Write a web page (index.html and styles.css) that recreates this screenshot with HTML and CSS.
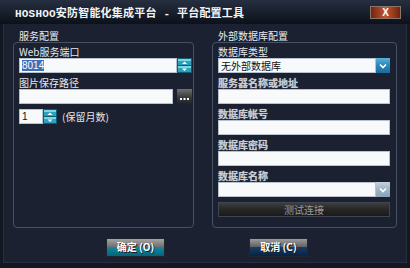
FILE: index.html
```html
<!DOCTYPE html>
<html lang="zh">
<head>
  <meta charset="UTF-8" />
  <title>平台配置工具</title>
  <link rel="stylesheet" href="styles.css">
</head>
<body>
  <div class="window">
    <div class="titlebar">
      <span class="title">HOSHOO安防智能化集成平台 - 平台配置工具</span>
      <button class="close-btn">X</button>
    </div>

    <div class="client">
      <div class="panels">
        <div class="group group-left">
          <div class="group-title">服务配置</div>

          <div class="field-label">Web服务端口</div>
          <div class="input-row">
            <div class="textbox"><span class="selected">8014</span></div>
            <span class="spin">
              <svg width="15" height="15" viewBox="0 0 15 15">
                <rect x="0" y="0" width="15" height="15" fill="#0b5f74"/>
                <rect x="1" y="1" width="13" height="6" fill="#2aa2bc"/>
                <rect x="1" y="8" width="13" height="6" fill="#2aa2bc"/>
                <rect x="1" y="1" width="13" height="2" fill="#7fd4e4"/>
                <rect x="1" y="8" width="13" height="2" fill="#7fd4e4"/>
                <polygon points="5,6 10,6 7.5,3.5" fill="#ffffff"/>
                <polygon points="5,10.5 10,10.5 7.5,13" fill="#ffffff"/>
              </svg>
            </span>
          </div>

          <div class="field-label">图片保存路径</div>
          <div class="input-row">
            <div class="textbox"></div>
            <span class="browse">
              <svg width="15" height="15" viewBox="0 0 15 15">
                <rect x="3" y="9" width="2" height="2" fill="#ffffff"/>
                <rect x="6.5" y="9" width="2" height="2" fill="#ffffff"/>
                <rect x="10" y="9" width="2" height="2" fill="#ffffff"/>
              </svg>
            </span>
          </div>

          <div class="input-row keep-row">
            <div class="textbox small">1</div>
            <span class="spin">
              <svg width="14" height="15" viewBox="0 0 14 15">
                <rect x="0" y="0" width="14" height="15" fill="#0b5f74"/>
                <rect x="1" y="1" width="12" height="6" fill="#2aa2bc"/>
                <rect x="1" y="8" width="12" height="6" fill="#2aa2bc"/>
                <rect x="1" y="1" width="12" height="2" fill="#7fd4e4"/>
                <rect x="1" y="8" width="12" height="2" fill="#7fd4e4"/>
                <polygon points="4.5,6 9.5,6 7,3.5" fill="#ffffff"/>
                <polygon points="4.5,10.5 9.5,10.5 7,13" fill="#ffffff"/>
              </svg>
            </span>
            <span class="hint">(保留月数)</span>
          </div>
        </div>

        <div class="group group-right">
          <div class="group-title">外部数据库配置</div>

          <div class="field-label">数据库类型</div>
          <div class="input-row">
            <div class="textbox combo-text">无外部数据库</div>
            <span class="drop">
              <svg width="14" height="15" viewBox="0 0 14 15">
                <polyline points="4,6.5 7,9.5 10,6.5" fill="none" stroke="#ffffff" stroke-width="1.6"/>
              </svg>
            </span>
          </div>

          <div class="field-label dim">服务器名称或地址</div>
          <div class="textbox"></div>

          <div class="field-label dim">数据库帐号</div>
          <div class="textbox"></div>

          <div class="field-label dim">数据库密码</div>
          <div class="textbox"></div>

          <div class="field-label dim">数据库名称</div>
          <div class="input-row">
            <div class="textbox"></div>
            <span class="drop disabled">
              <svg width="14" height="15" viewBox="0 0 14 15">
                <polyline points="4,6.5 7,9.5 10,6.5" fill="none" stroke="#ffffff" stroke-width="1.6"/>
              </svg>
            </span>
          </div>

          <button class="test-btn">测试连接</button>
        </div>
      </div>

      <div class="footer">
        <button class="dlg-btn ok-btn">确定 (O)</button>
        <button class="dlg-btn cancel-btn">取消 (C)</button>
      </div>
    </div>
  </div>
</body>
</html>
```

FILE: styles.css
```css
body {
  margin: 0;
  background: #121722;
  font-family: "Noto Sans CJK SC", "Noto Sans", sans-serif;
  font-size: 10px;
  color: #e6e8ec;
}

.window {
  width: 410px;
  height: 268px;
  display: flex;
  flex-direction: column;
  background: #121722;
  overflow: hidden;
}

.titlebar {
  height: 24px;
  flex: none;
  display: flex;
  align-items: center;
  padding-left: 15px;
  background: linear-gradient(#262f40, #0c111a);
}

.title {
  font-family: "Liberation Mono", "Noto Sans CJK SC", monospace;
  font-size: 11px;
  font-weight: bold;
  letter-spacing: 0.2px;
  color: #f2f4f8;
  white-space: nowrap;
}

.close-btn {
  margin-left: auto;
  margin-right: 9px;
  width: 31px;
  height: 13px;
  padding: 0;
  border: 1px solid #8c7468;
  background: linear-gradient(to right, #6e2414, #c8552c 50%, #6e2414);
  color: #ffffff;
  font-family: "Liberation Sans", sans-serif;
  font-size: 10px;
  font-weight: bold;
  line-height: 11px;
}

.client {
  flex: 1;
  margin: 0 3px 5px 3px;
  border: 1px solid #283040;
  border-top: none;
  background: #1b2130;
}

.panels {
  display: flex;
  gap: 18px;
  padding: 18px 0 0 9px;
}

.group {
  height: 186px;
  box-sizing: border-box;
  border: 1px solid #465162;
  border-radius: 4px;
}

.group-left {
  width: 181px;
  padding: 0 1px 0 5px;
}

.group-right {
  width: 185px;
  padding: 0 6px 0 5px;
}

.group-title {
  width: fit-content;
  margin: -13px 0 0 -1px;
  padding: 0 1px;
  line-height: 12px;
  background: #1b2130;
  color: #e8eaee;
}

.field-label {
  line-height: 13px;
  margin-top: 3px;
  white-space: nowrap;
}

.group-left .field-label:nth-of-type(3) {
  margin-top: 5px;
}

.field-label.dim {
  font-weight: bold;
  color: #c9cdd3;
  text-shadow: 0 0 1px #9aa0a8;
}

.input-row {
  display: flex;
  align-items: center;
}

.textbox {
  flex: 1;
  height: 15px;
  box-sizing: border-box;
  background: #f7f9fb;
  border: 1px solid #b8c2cc;
  color: #111111;
  line-height: 13px;
  padding-left: 2px;
  font-family: "Liberation Sans", "Noto Sans CJK SC", sans-serif;
}

.selected {
  background: #3f6fb8;
  color: #ffffff;
}

.combo-text {
  font-family: "Noto Sans CJK SC", sans-serif;
}

.spin {
  display: flex;
  flex: none;
}

.browse {
  display: flex;
  flex: none;
  margin-left: 4px;
  width: 15px;
  height: 15px;
  background: linear-gradient(#707070, #3a3a3a 55%, #1e2228);
}

.keep-row {
  margin-top: 5px;
}

.textbox.small {
  flex: none;
  width: 24px;
}

.hint {
  margin-left: 5px;
  color: #e6e8ec;
}

.drop {
  display: flex;
  flex: none;
  width: 14px;
  height: 15px;
  background: linear-gradient(#5ab0dc, #2a86ba 50%, #1a6a9c);
}

.drop.disabled {
  background: linear-gradient(#c4d2de, #9fb4c6 50%, #8aa2b6);
}

.test-btn {
  display: block;
  width: 100%;
  height: 15px;
  margin-top: 5px;
  padding: 0;
  border: 1px solid #3e4450;
  background: linear-gradient(#3e3e3e, #262626 50%, #1a1a1a);
  color: #9a9a9a;
  font-family: "Noto Sans CJK SC", sans-serif;
  font-size: 10px;
  line-height: 13px;
}

.footer {
  display: flex;
  gap: 84px;
  padding-left: 102px;
  margin-top: 10px;
}

.dlg-btn {
  width: 59px;
  height: 19px;
  padding: 0 0 2px 0;
  border: 1px solid #20262e;
  color: #ffffff;
  font-family: "Noto Sans CJK SC", sans-serif;
  font-size: 10px;
  font-weight: bold;
  line-height: 15px;
  text-shadow: 1px 1px 0 #1a1a1a;
}

.ok-btn {
  background: linear-gradient(#a4a4a4, #6c6c6c 50%, #0c88a2 50%, #07627a);
}

.cancel-btn {
  background: linear-gradient(#9c9c9c, #5c5c5c 50%, #163c62 50%, #0a2242);
}
```
